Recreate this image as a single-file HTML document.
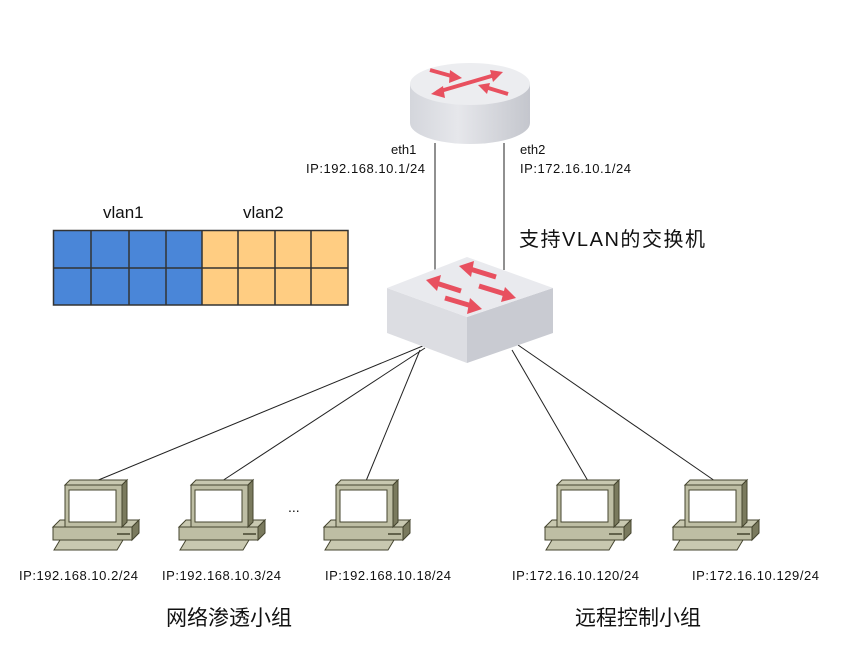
<!DOCTYPE html>
<html><head><meta charset="utf-8"><style>html,body{margin:0;padding:0;background:#fff}svg{display:block}</style></head>
<body>
<svg width="862" height="658" viewBox="0 0 862 658" xmlns="http://www.w3.org/2000/svg" font-family="Liberation Sans, Noto Sans CJK SC, sans-serif">
<defs>
<linearGradient id="rb" x1="0" x2="1"><stop offset="0" stop-color="#d4d6dc"/><stop offset="0.4" stop-color="#e6e7eb"/><stop offset="1" stop-color="#c4c6cd"/></linearGradient>
<g id="pc" stroke="#45452f" stroke-width="1">
<polygon points="-11,65 -5,55 58,55 52,65" fill="#c8c8b0"/>
<polygon points="-12,42 -5,35 74,35 67,42" fill="#c8c8b0"/>
<rect x="-12" y="42" width="79" height="13" fill="#bebea4"/>
<polygon points="67,42 74,35 74,48 67,55" fill="#7a7a5e"/>
<line x1="52" y1="49" x2="65" y2="49" stroke-width="1.5"/>
<polygon points="0,0 5,-5 62,-5 57,0" fill="#c8c8b0"/>
<polygon points="57,0 62,-5 62,37 57,42" fill="#7a7a5e"/>
<rect x="0" y="0" width="57" height="42" fill="#bebea4"/>
<rect x="4" y="5" width="47" height="32" fill="#fff"/>
</g>
</defs>
<g stroke="#222" stroke-width="1">
<line x1="435" y1="143" x2="435" y2="270"/>
<line x1="504" y1="143" x2="504" y2="270"/>
<line x1="430" y1="343" x2="96" y2="481"/>
<line x1="425" y1="348" x2="222" y2="481"/>
<line x1="420" y1="350" x2="366" y2="481"/>
<line x1="512" y1="350" x2="588" y2="481"/>
<line x1="518" y1="345" x2="715" y2="481"/>
</g>
<path d="M410,84 L410,123 A60,21 0 0 0 530,123 L530,84 Z" fill="url(#rb)"/>
<ellipse cx="470" cy="84" rx="60" ry="21" fill="#ecedf0"/>
<g stroke="#e8505f" stroke-width="4" fill="#e8505f">
<line x1="430" y1="70" x2="455" y2="77"/><polygon points="462,78 450,70 449,83" stroke="none"/>
<line x1="437" y1="92" x2="495" y2="75"/><polygon points="431,94 443,86 445,98" stroke="none"/><polygon points="503,72 490,70 493,82" stroke="none"/>
<line x1="508" y1="94" x2="485" y2="87"/><polygon points="478,85 490,83 487,94" stroke="none"/>
</g>
<polygon points="387,288 467,317 467,363 387,333" fill="#dcdde2"/>
<polygon points="467,317 553,288 553,333 467,363" fill="#c9cbd2"/>
<polygon points="387,288 467,257 553,288 467,317" fill="#e9eaee"/>
<g stroke="#e8505f" stroke-width="5" fill="#e8505f">
<line x1="496" y1="277" x2="470" y2="269"/><polygon points="459,266 474,261 471,277" stroke="none"/>
<line x1="461" y1="291" x2="436" y2="283"/><polygon points="426,280 441,275 437,291" stroke="none"/>
<line x1="479" y1="286" x2="505" y2="294"/><polygon points="516,298 501,302 505,287" stroke="none"/>
<line x1="445" y1="298" x2="472" y2="306"/><polygon points="482,309 467,314 470,298" stroke="none"/>
</g>
<rect x="53" y="230" width="149" height="75" fill="#4a86d8"/>
<rect x="202" y="230" width="146" height="75" fill="#ffcd82"/>
<g stroke="#333" stroke-width="1.5" fill="none">
<rect x="53.5" y="230.5" width="294.5" height="74.5"/>
<line x1="53" y1="268" x2="348" y2="268"/>
<line x1="91" y1="230" x2="91" y2="305"/><line x1="129" y1="230" x2="129" y2="305"/><line x1="166" y1="230" x2="166" y2="305"/><line x1="202" y1="230" x2="202" y2="305"/><line x1="238" y1="230" x2="238" y2="305"/><line x1="275" y1="230" x2="275" y2="305"/><line x1="311" y1="230" x2="311" y2="305"/>
</g>
<use href="#pc" x="65" y="485"/>
<use href="#pc" x="191" y="485"/>
<use href="#pc" x="336" y="485"/>
<use href="#pc" x="557" y="485"/>
<use href="#pc" x="685" y="485"/>
<g fill="#111" font-size="13">
<text x="103" y="218" font-size="17">vlan1</text>
<text x="243" y="218" font-size="17">vlan2</text>
<text x="391" y="154" font-size="13">eth1</text>
<text x="306" y="173" font-size="13" textLength="119">IP:192.168.10.1/24</text>
<text x="520" y="154" font-size="13">eth2</text>
<text x="520" y="173" font-size="13" textLength="111">IP:172.16.10.1/24</text>
<text x="519" y="246" font-size="20" textLength="186">支持VLAN的交换机</text>
<text x="288" y="512" font-size="14">...</text>
<text x="19" y="580" font-size="13" textLength="119">IP:192.168.10.2/24</text>
<text x="162" y="580" font-size="13" textLength="119">IP:192.168.10.3/24</text>
<text x="325" y="580" font-size="13" textLength="126">IP:192.168.10.18/24</text>
<text x="512" y="580" font-size="13" textLength="127">IP:172.16.10.120/24</text>
<text x="692" y="580" font-size="13" textLength="127">IP:172.16.10.129/24</text>
<text x="166" y="625" font-size="21">网络渗透小组</text>
<text x="575" y="625" font-size="21">远程控制小组</text>
</g>
</svg>
</body></html>
